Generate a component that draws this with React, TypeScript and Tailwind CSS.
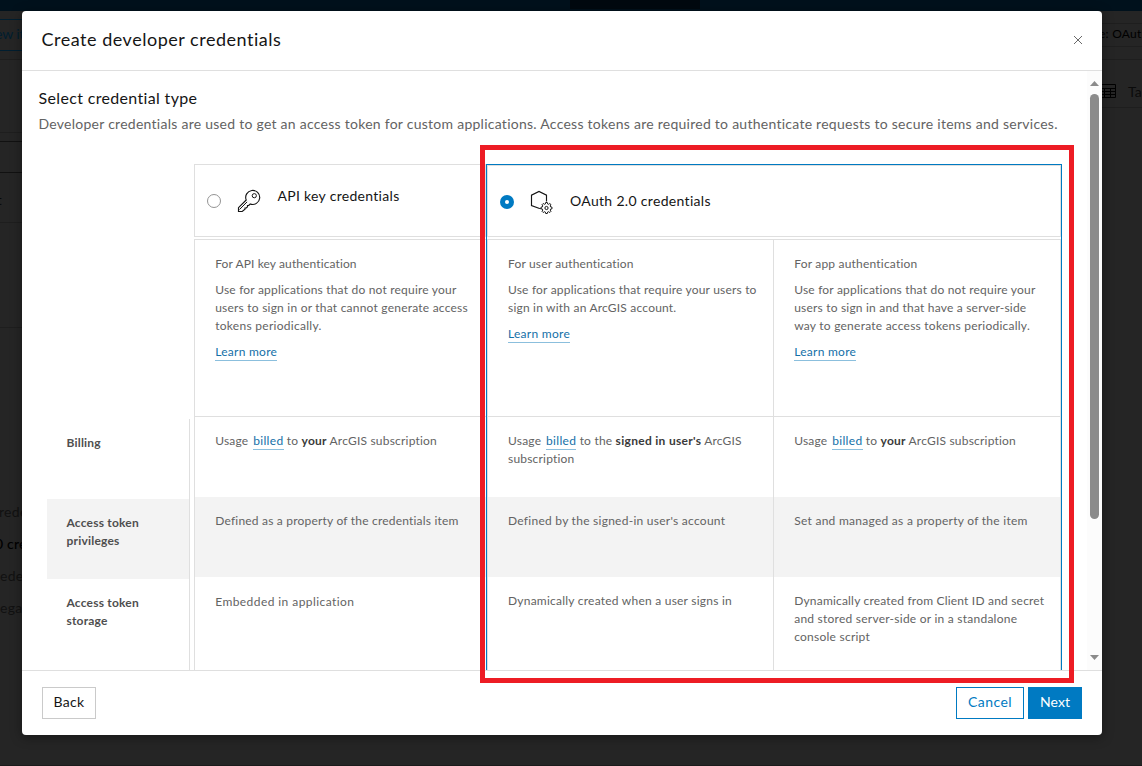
import React from "react";

function KeyIcon() {
  return (
    <svg width="24" height="24" viewBox="0 0 24 24" fill="none" stroke="#151515" strokeWidth="1">
      <path d="M9.200 11a7 7 0 1 1 4.100 4l-1.600 1.500h-1.200v1.300l-1.200 1.200H8v1.300L5.200 22.500H1.500v-3.800z" strokeWidth="1.150" />
      <path d="M2.500 20.500l7.600-7.600" />
      <circle cx="17.300" cy="6.700" r="2.100" />
    </svg>
  );
}

function AppGearIcon() {
  return (
    <svg width="24" height="24" viewBox="0 0 24 24" fill="none" stroke="#151515" strokeWidth="1">
      <path d="M11.200 18.800l-1.700-.3-8-3V5.200L9 1.500l7.500 3.700v6.300" strokeWidth="1.150" />
      <path d="M15.700 12.500h1.600l.3 1.400 1 .4 1.200-.8 1.200 1.200-.8 1.200.4 1 1.400.3v1.600l-1.400.3-.4 1 .8 1.200-1.200 1.200-1.200-.8-1 .4-.3 1.400h-1.600l-.3-1.400-1-.4-1.200.8-1.200-1.200.8-1.200-.4-1-1.400-.3v-1.600l1.400-.3.4-1-.8-1.200 1.200-1.200 1.200.8 1-.4z" />
      <circle cx="16.500" cy="18" r="1.600" />
    </svg>
  );
}

function Link({ children }: { children: React.ReactNode }) {
  return <a className="border-b border-[#8bbfdd] pb-px text-[#1470a8]">{children}</a>;
}

function LearnMore() {
  return (
    <p className="mt-2 tracking-[0.27px]">
      <Link>Learn more</Link>
    </p>
  );
}

function Billed() {
  return (
    <span className="ml-[1.5px] tracking-[0.35px]">
      <Link>billed</Link>
    </span>
  );
}

export default function App() {
  return (
    <div className="relative h-[766px] w-[1142px] overflow-hidden bg-[#252525] font-['Lato','Noto_Sans',sans-serif]">
      <div className="flex h-full flex-col">
        <div className="flex h-[11px] shrink-0 bg-[#00111c]">
          <div className="ml-[570px] h-[9px] w-[130px] bg-[#00090f]" />
        </div>
        <div className="flex min-h-0 flex-1 justify-between">
          <div className="w-[30px] whitespace-nowrap text-[14px] text-[#080808]">
            <div className="mt-2 flex h-8 items-center border-y border-[#001e30] pb-1 text-[14px] text-[#001e30]"><span className="-ml-[5px] tracking-[-0.1px]">ew it</span></div>
            <div className="mt-2 h-[74px] border-y border-[#1e1e1e]" />
            <div className="mt-2 h-8 border-y border-[#111]" />
            <div className="h-[50px] border-b border-[#1e1e1e] pt-[17px] text-[13px] leading-[20px]"><span className="-ml-[3px]">t</span></div>
            <div className="h-[105px] border-b border-[#1e1e1e]" />
            <div className="mt-[167px] flex h-8 items-center tracking-[0.3px] text-[#111]"><span className="-ml-px">rede</span></div>
            <div className="flex h-8 items-center font-medium tracking-[0.2px] text-black"><span className="-ml-[5px]">0 cre</span></div>
            <div className="flex h-8 items-center tracking-[0.3px] text-[#111]">ede</div>
            <div className="flex h-8 items-center tracking-[0.3px] text-[#111]">ega</div>
          </div>
          <div className="w-10 overflow-hidden whitespace-nowrap text-black">
            <div className="mt-3 flex h-6 items-center border-y border-[#1e1e1e] pb-0.5 text-[12px] tracking-[0.25px]">
              <span className="-ml-[3px]">e: OAuth</span>
            </div>
            <div className="mt-3 flex h-[49px] items-center border-y border-[#1e1e1e] pt-[15px] text-[14px]">
              <svg className="shrink-0" width="14" height="14" viewBox="0 0 14 14" fill="none" stroke="#000">
                <path d="M-1 .5h14.500v13H-1M-1 4.500h14.500M-1 7.500h14.500M-1 10.500h14.500M2.500 4.500v9M8.500 4.500v9" />
              </svg>
              <span className="ml-3 text-[#0b0b0b]">Table</span>
            </div>
          </div>
        </div>
        <div className="h-px shrink-0 bg-[#1b1b1b]" />
      </div>

      <div className="absolute left-[22px] top-[11px] flex h-[724px] w-[1080px] flex-col overflow-hidden rounded bg-white text-[#151515] shadow-[0_2px_12px_rgba(0,0,0,0.4)]">
        <header className="flex h-[60px] shrink-0 items-center justify-between border-b border-[#dfdfdf] pb-0.5 pl-[19.5px] pr-[19px]">
          <h1 className="pb-0.5 text-[18px] leading-6 tracking-[0.52px]">Create developer credentials</h1>
          <svg width="10" height="10" viewBox="0 0 10 10" fill="none" stroke="#6a6a6a">
            <path d="M1 1l8 8M9 1l-8 8" />
          </svg>
        </header>

        <div className="flex min-h-0 flex-1 overflow-hidden">
          <main className="flex h-full w-[1065px] flex-col pt-[15px]">
            <h2 className="pl-[16.5px] text-[16px] leading-6 tracking-[0.34px]">Select credential type</h2>
            <p className="mt-1 whitespace-nowrap pl-[16.5px] text-[14px] leading-5 tracking-[0.26px] text-[#636363]">
              Developer credentials are used to get an access token for custom applications. Access tokens are required to authenticate requests to secure items and services.
            </p>

            <div className="mt-[30px] flex min-h-0 flex-1 items-start whitespace-nowrap text-[12px] leading-[18px] tracking-[0.2px] text-[#636363]">
              <div className="ml-[25px] mt-[255px] w-[143px] border-r border-[#dfdfdf] text-[12px] font-bold tracking-[0.2px] text-[#4f4f4f]">
                <div className="h-20 pl-[19.5px] pt-[15px]">Billing</div>
                <div className="h-20 bg-[#f3f3f3] pl-[19.5px] pt-[15px]">Access token<br />privileges</div>
                <div className="h-[110px] pl-[19.5px] pt-[15px]">Access token<br />storage</div>
              </div>

              <section className="ml-1 w-[292px]">
                <div className="flex h-[73px] border border-[#dfdfdf] pl-3">
                  <span className="mt-[29px] h-[14px] w-[14px] rounded-full border border-[#949494]" />
                  <span className="ml-4 mt-6"><KeyIcon /></span>
                  <span className="ml-[16.5px] mt-[21px] text-[14px] leading-5 tracking-[0.3px] text-[#151515]">API key credentials</span>
                </div>
                <div className="mt-0.5 border-l border-t border-[#dfdfdf]">
                  <div className="h-[176px] pl-[20.2px] pt-[15px]">
                    <p className="tracking-[0.11px]">For API key authentication</p>
                    <p className="mt-2">
                      Use for applications that do not require your<br />
                      <span className="tracking-[0.22px]">users to sign in or that cannot generate access</span><br />
                      <span className="tracking-[0.28px]">tokens periodically.</span>
                    </p>
                    <LearnMore />
                  </div>
                  <div className="h-[81px] border-t border-[#dfdfdf] pl-[20.2px] pt-[15px]">
                    Usage <Billed /> to <b className="text-[#3a3a3a]">your</b> ArcGIS subscription
                  </div>
                  <div className="h-20 bg-[#f3f3f3] pl-[20.2px] pt-[15px]">Defined as a property of the credentials item</div>
                  <div className="h-[110px] pl-[20.2px] pt-4 tracking-[0.43px]">Embedded in application</div>
                </div>
              </section>

              <section className="w-[576px] border border-[#007ac2]">
                <div className="flex h-[72px] border border-[#dfdfdf] pl-3">
                  <span className="mt-[29px] flex h-[14px] w-[14px] items-center justify-center rounded-full bg-[#007ac2]">
                    <span className="h-1 w-1 rounded-full bg-white" />
                  </span>
                  <span className="ml-4 mt-6"><AppGearIcon /></span>
                  <span className="ml-4 mt-[25px] text-[14px] leading-5 tracking-[0.32px] text-[#151515]">OAuth 2.0 credentials</span>
                </div>
                <div className="mt-0.5 flex border-x border-t border-[#dfdfdf]">
                  <div className="w-[286px] border-r border-[#dfdfdf]">
                    <div className="h-[176px] pl-5 pt-[15px]">
                      <p className="tracking-[0.17px]">For user authentication</p>
                      <p className="mt-2">
                        <span className="tracking-[0.19px]">Use for applications that require your users to</span><br />
                        sign in with an ArcGIS account.
                      </p>
                      <LearnMore />
                    </div>
                    <div className="h-[81px] border-t border-[#dfdfdf] pl-5 pt-[15px]">
                      Usage <Billed /> to the <b className="tracking-[0.3px] text-[#3a3a3a]">signed in user's</b> ArcGIS<br />subscription
                    </div>
                    <div className="h-20 bg-[#f3f3f3] pl-5 pt-[15px] tracking-[0.26px]">Defined by the signed-in user's account</div>
                    <div className="h-[110px] pl-5 pt-[15px] tracking-[0.23px]">Dynamically created when a user signs in</div>
                  </div>
                  <div className="flex-1">
                    <div className="h-[176px] pl-[20.2px] pt-[15px]">
                      <p>For app authentication</p>
                      <p className="mt-2">
                        Use for applications that do not require your<br />
                        users to sign in and that have a server-side<br />
                        <span className="tracking-[0.24px]">way to generate access tokens periodically.</span>
                      </p>
                      <LearnMore />
                    </div>
                    <div className="h-[81px] border-t border-[#dfdfdf] pl-[20.2px] pt-[15px]">
                      Usage <Billed /> to <b className="text-[#3a3a3a]">your</b> ArcGIS subscription
                    </div>
                    <div className="h-20 bg-[#f3f3f3] pl-[20.2px] pt-[15px] tracking-[0.27px]">Set and managed as a property of the item</div>
                    <div className="h-[110px] pl-[20.2px] pt-[15px]">
                      <span className="tracking-[0.19px]">Dynamically created from Client ID and secret</span><br />
                      <span className="tracking-[0.24px]">and stored server-side or in a standalone</span><br />
                      <span className="tracking-[0.24px]">console script</span>
                    </div>
                  </div>
                </div>
              </section>
            </div>
          </main>

          <div className="flex w-[15px] flex-col items-center bg-[#fcfcfc] pt-[10px]">
            <svg width="9" height="5" viewBox="0 0 9 5" fill="#8b8b8b"><path d="M4.500 0L9 5H0z" /></svg>
            <div className="mt-2 h-[425px] w-[9px] rounded-full bg-[#8b8b8b]" />
            <svg className="mt-[136px]" width="9" height="5" viewBox="0 0 9 5" fill="#8b8b8b"><path d="M0 0h9L4.500 5z" /></svg>
          </div>
        </div>

        <footer className="flex h-[65px] shrink-0 items-start border-t border-[#dfdfdf] px-5 pt-4 text-[14px] leading-[28px]">
          <button className="h-8 w-[54px] border border-[#cacaca] pb-0.5 tracking-[0.33px]">Back</button>
          <button className="ml-auto h-8 w-[68px] border border-[#007ac2] pb-0.5 tracking-[0.44px] text-[#007ac2]">Cancel</button>
          <button className="ml-1 h-8 w-[54px] border border-[#007ac2] bg-[#007ac2] pb-0.5 tracking-[0.1px] text-white">Next</button>
        </footer>
      </div>

      <div className="absolute left-[480px] top-[145px] h-[538px] w-[594px] border-5 border-[#ed1c24]" />
    </div>
  );
}
